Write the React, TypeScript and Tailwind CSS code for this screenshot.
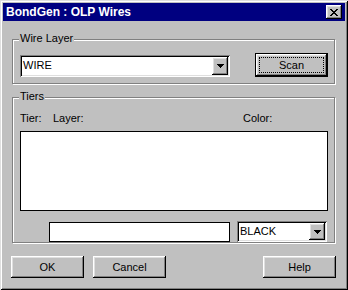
import React from 'react'

const raised =
  'shadow-[inset_-1px_-1px_0_#000,inset_1px_1px_0_#fff,inset_-2px_-2px_0_#808080,inset_2px_2px_0_#dfdfdf]'
const sunken =
  'shadow-[inset_1px_1px_0_#808080,inset_-1px_-1px_0_#fff,inset_2px_2px_0_#000,inset_-2px_-2px_0_#dfdfdf]'

const CLOSE_ROWS = ['11000011', '01100110', '00111100', '00011000', '00111100', '01100110', '11000011']
const ARROW_ROWS = ['1111111', '0111110', '0011100', '0001000']

function PixelGlyph({ rows }: { rows: string[] }) {
  const w = rows[0].length
  const h = rows.length
  return (
    <svg width={w} height={h} viewBox={`0 0 ${w} ${h}`} shapeRendering="crispEdges">
      {rows.map((row, y) =>
        row.split('').map((c, x) =>
          c === '1' ? <rect key={`${x}-${y}`} x={x} y={y} width={1} height={1} fill="#000" /> : null
        )
      )}
    </svg>
  )
}

function Combo({ value, className }: { value: string; className: string }) {
  return (
    <div className={`flex bg-white p-[2px] ${sunken} ${className}`}>
      <span className="flex-1 pl-[1px] leading-[17px]">{value}</span>
      <div className={`w-[16px] h-full bg-[#c0c0c0] flex items-center justify-center ${raised}`}>
        <PixelGlyph rows={ARROW_ROWS} />
      </div>
    </div>
  )
}

function Button({ label, className = '' }: { label: string; className?: string }) {
  return (
    <div className={`w-[73px] h-[22px] bg-[#c0c0c0] flex items-center justify-center ${raised} ${className}`}>
      {label}
    </div>
  )
}

function GroupBox({ title, className, children }: { title: string; className: string; children: React.ReactNode }) {
  return (
    <div
      className={`relative ml-[9px] w-[323px] border border-[#808080] shadow-[1px_1px_0_#fff,inset_1px_1px_0_#fff] ${className}`}
    >
      <span className="absolute top-[-8px] left-[6px] px-[1px] bg-[#c0c0c0] leading-[13px]">{title}</span>
      {children}
    </div>
  )
}

export default function App() {
  return (
    <div
      className={`w-[348px] h-[290px] bg-[#c0c0c0] p-[3px] flex flex-col text-[11px] text-black shadow-[inset_1px_1px_0_#dfdfdf,inset_-1px_-1px_0_#000,inset_2px_2px_0_#fff,inset_-2px_-2px_0_#808080]`}
      style={{ fontFamily: '"Liberation Sans", Arial, sans-serif' }}
    >
      <div className="h-[18px] bg-[#000080] flex items-center justify-between pl-[3px] pr-[3px]">
        <span className="text-white font-bold text-[12px] leading-[18px]">BondGen : OLP Wires</span>
        <div className={`w-[16px] h-[14px] bg-[#c0c0c0] flex items-center justify-center ${raised}`}>
          <PixelGlyph rows={CLOSE_ROWS} />
        </div>
      </div>

      <GroupBox title="Wire Layer" className="mt-[18px] h-[45px]">
        <div className="flex items-start pl-[7px] pt-[13px]">
          <Combo value="WIRE" className="mt-[2px] w-[210px] h-[22px]" />
          <div className="ml-[25px] w-[73px] h-[24px] border border-black">
            <div className={`h-full p-[3px] ${raised}`}>
              <div className="h-full border border-dotted border-black flex items-center justify-center">
                Scan
              </div>
            </div>
          </div>
        </div>
      </GroupBox>

      <GroupBox title="Tiers" className="mt-[13px] h-[146px]">
        <div className="flex flex-col pl-[7px] pt-[14px]">
          <div className="flex leading-[13px]">
            <span className="w-[33px]">Tier:</span>
            <span className="w-[190px]">Layer:</span>
            <span>Color:</span>
          </div>
          <div className="mt-[6px] w-[308px] h-[80px] bg-white border border-black" />
          <div className="mt-[10px] flex items-start">
            <div className="ml-[29px] mt-[1px] w-[181px] h-[20px] bg-white border border-black" />
            <Combo value="BLACK" className="ml-[7px] w-[90px] h-[21px]" />
          </div>
        </div>
      </GroupBox>

      <div className="mt-[13px] flex pl-[8px] pr-[9px]">
        <Button label="OK" />
        <Button label="Cancel" className="ml-[9px]" />
        <Button label="Help" className="ml-auto" />
      </div>
    </div>
  )
}
